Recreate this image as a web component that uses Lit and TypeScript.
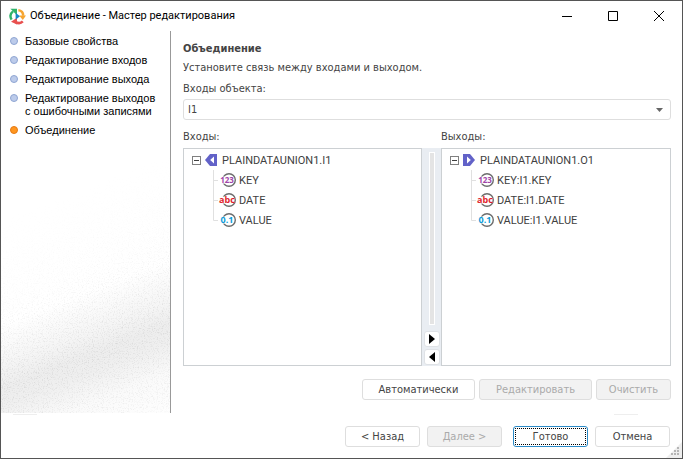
import { LitElement, html, css, svg } from "lit";
import { customElement, property } from "lit/decorators.js";

type Kind = "123" | "abc" | "0.1";
interface Field { kind: Kind; name: string; }

const STEPS = [
  "Базовые свойства",
  "Редактирование входов",
  "Редактирование выхода",
  "Редактирование выходов\nс ошибочными записями",
  "Объединение",
];
const INPUTS: Field[] = [
  { kind: "123", name: "KEY" },
  { kind: "abc", name: "DATE" },
  { kind: "0.1", name: "VALUE" },
];
const OUTPUTS: Field[] = [
  { kind: "123", name: "KEY:I1.KEY" },
  { kind: "abc", name: "DATE:I1.DATE" },
  { kind: "0.1", name: "VALUE:I1.VALUE" },
];
const COLOURS: Record<Kind, string> = { "123": "#a044a8", abc: "#e01f2d", "0.1": "#0c9bd8" };

const logo = svg`
  <path d="M2.6 11.6C.8 8.6 1.4 5.4 4 3.4" fill="none" stroke="#2fb36b" stroke-width="2.4"/>
  <path d="M1.4 .8H8v6.4z" fill="#2fb36b"/>
  <path d="M9.4 2.2c3 .2 4.8 2.6 4.8 5.6" fill="none" stroke="#f6a531" stroke-width="2.6"/>
  <path d="M10.2 7.4h6.8L13.8 12z" fill="#f6a531"/>
  <path d="M13.8 13.4c-2 2-5 2-7.4 .4" fill="none" stroke="#e8504f" stroke-width="2.6"/>
  <path d="M8 9.8v6.8L2 13.8z" fill="#e8504f"/>
  <path d="M6.6 4.8v7l4.4-3.5z" fill="#1687c9"/>`;

@customElement("field-tree")
export class FieldTree extends LitElement {
  @property() root = "";
  @property() direction: "in" | "out" = "in";
  @property({ attribute: false }) fields: Field[] = [];

  static styles = css`
    :host { display: block; box-sizing: border-box; border: 1px solid #ccd0d3; background: #fff;
      padding: 1px 8px; font: 11px/18px Roboto, "Noto Sans", sans-serif; color: #404040; }
    .root { display: flex; align-items: center; height: 20px; gap: 4px; }
    span { padding-top: 2px; }
    .root span { padding-left: 1px; }
    .toggle { width: 9px; height: 9px; padding: 0; border: 1px solid #808080; background: #fff; display: flex;
      align-items: center; justify-content: center; }
    .toggle::before { content: ""; width: 5px; height: 1px; background: #404040; }
    svg { display: block; flex: none; }
    ul { list-style: none; margin: 0 0 0 21px; padding: 0; }
    li { display: flex; align-items: center; height: 20px; white-space: nowrap; }
    .branch { flex: none; width: 5px; height: 20px; }
    .glyph { margin-right: 1px; }
  `;

  render() {
    return html`
      <div class="root">
        <button class="toggle" aria-label="Свернуть"></button>
        <svg width="12" height="12" viewBox="0 0 12 12" aria-hidden="true">
          ${this.direction === "in"
            ? svg`<path d="M5 0h7v12H5L0 6z" fill="#6262c8"/><path d="M9 2.5v7L5.2 6z" fill="#fff"/>`
            : svg`<path d="M0 0h7l5 6-5 6H0z" fill="#6262c8"/><path d="M4 2.5v7L7.8 6z" fill="#fff"/>`}
        </svg>
        <span>${this.root}</span>
      </div>
      <ul>
        ${this.fields.map((f, i) => html`
          <li>
            <svg class="branch" viewBox="0 0 5 20" aria-hidden="true">
              <path d=${i === this.fields.length - 1 ? "M.5 0V10.5H5" : "M.5 0V20M.5 10.5H5"} fill="none" stroke="#e0e0e0"/>
            </svg>
            <svg class="glyph" width="20" height="16" viewBox="0 0 20 16" aria-hidden="true">
              <circle cx="11" cy="8" r="6.3" fill="#fff" stroke="#6c6c6c" stroke-width="1.4"/>
              <path d="M1 4.6h14v7H1z" fill="#fff"/>
              <text x="9" y="11" text-anchor="middle" font-family="Open Sans, sans-serif"
                font-weight="700" font-size=${f.kind === "123" ? 8 : 9} fill=${COLOURS[f.kind]}>${f.kind}</text>
            </svg>
            <span>${f.name}</span>
          </li>`)}
      </ul>`;
  }
}

@customElement("app-root")
export class AppRoot extends LitElement {
  static styles = css`
    :host { display: flex; flex-direction: column; box-sizing: border-box; min-height: 100vh; position: relative;
      border: 1px solid #555; background: #fff; color: #444;
      font: 11px/13px "DejaVu Sans Condensed", "DejaVu Sans", sans-serif; }
    * { box-sizing: border-box; }
    header { display: flex; align-items: center; height: 30px; padding-left: 8px; color: #000; }
    h1 { flex: 1; margin: 0 0 0 4px; font: 11px/16px Roboto, "Noto Sans", sans-serif; }
    .caption { width: 46px; height: 29px; padding: 0; border: 0; background: none; display: flex;
      align-items: center; justify-content: center; }
    .body { flex: 1; display: flex; }
    nav { flex: none; width: 170px; position: relative; border-right: 1px solid #999; color: #000;
      font-family: "Liberation Sans", Arial, sans-serif; }
    .texture { position: absolute; inset: 0; width: 100%; height: 100%; }
    .shade { position: absolute; inset: 0;
      background: linear-gradient(159deg, transparent 66%, #f5f5f5 75%, #ededed 80%, #efefef 84%, #fafafa 91%, #fefefe 100%); }
    .noise { mask-image: linear-gradient(159deg, transparent 42%, rgb(0 0 0 / .2) 60%, rgb(0 0 0 / .7) 74%, #000 80%, rgb(0 0 0 / .6) 90%, rgb(0 0 0 / .4)); }
    ol { position: relative; list-style: none; margin: 0; padding: 4px 0 0 9px; display: grid; gap: 6px; }
    li { display: flex; gap: 7px; white-space: pre; }
    .dot { flex: none; width: 8px; height: 8px; margin-top: 2px; border-radius: 50%; border: 1px solid #8fa5d2; background: #bccbea; }
    .current .dot { border-color: #e57a14; background: #ff961f; }
    main { flex: 1; min-width: 0; display: flex; flex-direction: column; padding: 11px 11px 13px 12px; }
    h2 { margin: 0; font: bold 11px/13px "DejaVu Sans Condensed", sans-serif; }
    p { margin: 6px 0 8px; }
    select { display: block; width: 100%; height: 21px; margin-top: 4px; padding: 0 4px; appearance: none;
      border: 1px solid #dedede; border-radius: 3px; background: #fff; color: inherit; font: inherit; }
    .combo { display: grid; align-items: center; }
    .combo > * { grid-area: 1 / 1; }
    .combo svg { justify-self: end; margin: 4px 8px 0 0; pointer-events: none; }
    .panes { flex: 1; display: grid; grid-template-columns: 239fr 19px 230fr; grid-template-rows: 13px 1fr;
      row-gap: 5px; margin-top: 10px; }
    .splitter { background: #e9edf2; display: flex; flex-direction: column; align-items: center; gap: 2px; padding: 4px 0 1px; }
    .track { flex: 1; width: 6px; margin-bottom: 4px; border: 1px solid #fff; background: #e4e4e4; }
    .move { width: 16px; height: 16px; padding: 0; border: 1px solid #dfe2e6; border-radius: 3px; background: #fff;
      display: flex; align-items: center; justify-content: center; }
    .actions { display: flex; justify-content: flex-end; gap: 4px; margin-top: 13px; }
    .btn { width: 75px; height: 21px; padding: 0; border: 1px solid #dedede; border-radius: 3px; background: #fff;
      color: inherit; font: inherit; }
    .wide { width: 113px; }
    .btn:disabled { background: #f2f2f2; color: #aaa; }
    .default { border-color: #2b8bc8; outline: 1px dotted #000; outline-offset: -3px; }
    footer { padding: 0 12px 11px; }
    .marks { display: flex; justify-content: space-between; height: 13px; padding: 1px 32px 0 0; }
    .marks i { width: 24px; height: 1px; background: #eee; }
    .buttons { display: flex; justify-content: flex-end; gap: 7px; }
    .buttons .default { margin-left: 4px; }
    .grip { position: absolute; right: 0; bottom: 0; }
  `;

  render() {
    return html`
      <header>
        <svg width="17" height="17" viewBox="0 0 17 17" aria-hidden="true">${logo}</svg>
        <h1>Объединение - Мастер редактирования</h1>
        <button class="caption" aria-label="Свернуть"><svg width="10" height="11"><path d="M0 5.5h10" stroke="#000"/></svg></button>
        <button class="caption" aria-label="Развернуть"><svg width="10" height="10"><path d="M.5.5h9v9h-9z" fill="none" stroke="#000"/></svg></button>
        <button class="caption" aria-label="Закрыть"><svg width="10" height="10"><path d="M0 0l10 10M10 0L0 10" stroke="#000"/></svg></button>
      </header>
      <div class="body">
        <nav>
          <div class="shade"></div>
          <svg class="texture noise" aria-hidden="true">
            <filter id="grain" x="0" y="0" width="100%" height="100%">
              <feTurbulence type="fractalNoise" baseFrequency="0.8" numOctaves="2" seed="4"/>
              <feColorMatrix values="0 0 0 0 .6  0 0 0 0 .6  0 0 0 0 .6  1.8 0 0 0 -.9"/>
            </filter>
            <rect width="100%" height="100%" filter="url(#grain)"/>
          </svg>
          <ol>
            ${STEPS.map((s, i) => html`<li class=${i === STEPS.length - 1 ? "current" : ""}><span class="dot"></span><span>${s}</span></li>`)}
          </ol>
        </nav>
        <main>
          <h2>Объединение</h2>
          <p>Установите связь между входами и выходом.</p>
          <label for="port">Входы объекта:</label>
          <div class="combo">
            <select id="port"><option>I1</option></select>
            <svg width="7" height="4" aria-hidden="true"><path d="M0 0h7L3.5 4z" fill="#666"/></svg>
          </div>
          <div class="panes">
            <span>Входы:</span><span></span><span>Выходы:</span>
            <field-tree root="PLAINDATAUNION1.I1" direction="in" .fields=${INPUTS}></field-tree>
            <div class="splitter">
              <div class="track"></div>
              <button class="move" aria-label="Вправо"><svg width="6" height="10"><path d="M0 0v10l6-5z"/></svg></button>
              <button class="move" aria-label="Влево"><svg width="6" height="10"><path d="M6 0v10L0 5z"/></svg></button>
            </div>
            <field-tree root="PLAINDATAUNION1.O1" direction="out" .fields=${OUTPUTS}></field-tree>
          </div>
          <div class="actions">
            <button class="btn wide">Автоматически</button>
            <button class="btn wide" disabled>Редактировать</button>
            <button class="btn" disabled>Очистить</button>
          </div>
        </main>
      </div>
      <footer>
        <div class="marks"><i></i><i></i></div>
        <div class="buttons">
          <button class="btn">&lt; Назад</button>
          <button class="btn" disabled>Далее &gt;</button>
          <button class="btn default">Готово</button>
          <button class="btn">Отмена</button>
        </div>
      </footer>
      <svg class="grip" width="16" height="16" aria-hidden="true">
        <path d="M16 0v16H0z" fill="#eee"/>
        <path d="M11 5h2v2h-2zM11 8h2v2h-2zM8 8h2v2H8zM5 11h2v2H5zM8 11h2v2H8zM11 11h2v2h-2z" fill="#b5b5b5"/>
      </svg>`;
  }
}
